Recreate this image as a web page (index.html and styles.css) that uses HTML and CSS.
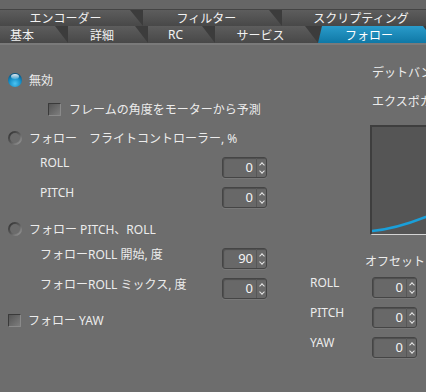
FILE: index.html
```html
<!DOCTYPE html>
<html lang="ja">
<head>
    <meta charset="UTF-8">
    <meta name="viewport" content="width=device-width, initial-scale=1.0">
    <title>フォロー</title>
    <link rel="stylesheet" href="styles.css">
</head>
<body>
    <!-- タブ -->
    <div class="tabs">
        <div class="tab-row row1">
            <div class="tab">エンコーダー</div>
            <div class="tab">フィルター</div>
            <div class="tab">スクリプティング</div>
        </div>
        <div class="tab-row row2">
            <div class="tab first">基本</div>
            <div class="tab">詳細</div>
            <div class="tab">RC</div>
            <div class="tab">サービス</div>
            <div class="tab active">フォロー</div>
        </div>
    </div>

    <div class="content">
        <div class="col-left">
            <div class="opt"><span class="radio on"></span>無効</div>
            <div class="opt sub"><span class="check"></span>フレームの角度をモーターから予測</div>
            <div class="opt"><span class="radio"></span>フォロー　フライトコントローラー, %</div>
            <div class="spin-row">
                <span class="label">ROLL</span>
                <div class="spin"><span class="val">0</span><span class="arrows"><i class="up"></i><i class="down"></i></span></div>
            </div>
            <div class="spin-row">
                <span class="label">PITCH</span>
                <div class="spin"><span class="val">0</span><span class="arrows"><i class="up"></i><i class="down"></i></span></div>
            </div>
            <div class="opt"><span class="radio"></span>フォロー PITCH、ROLL</div>
            <div class="spin-row">
                <span class="label">フォローROLL 開始, 度</span>
                <div class="spin"><span class="val">90</span><span class="arrows"><i class="up"></i><i class="down"></i></span></div>
            </div>
            <div class="spin-row">
                <span class="label">フォローROLL ミックス, 度</span>
                <div class="spin"><span class="val">0</span><span class="arrows"><i class="up"></i><i class="down"></i></span></div>
            </div>
            <div class="opt"><span class="check"></span>フォロー YAW</div>
        </div>

        <div class="col-right">
            <div class="caption">デットバンド, 度</div>
            <div class="caption expo">エクスポカーブ</div>
            <div class="chart">
                <svg width="200" height="107" viewBox="0 0 200 107">
                    <path d="M0 104 C 40 101, 120 67, 200 2" fill="none" stroke="#1a9fd9" stroke-width="2.5"/>
                </svg>
            </div>
            <div class="caption offset">オフセット</div>
            <div class="spin-row r">
                <span class="label">ROLL</span>
                <div class="spin"><span class="val">0</span><span class="arrows"><i class="up"></i><i class="down"></i></span></div>
            </div>
            <div class="spin-row r">
                <span class="label">PITCH</span>
                <div class="spin"><span class="val">0</span><span class="arrows"><i class="up"></i><i class="down"></i></span></div>
            </div>
            <div class="spin-row r">
                <span class="label">YAW</span>
                <div class="spin"><span class="val">0</span><span class="arrows"><i class="up"></i><i class="down"></i></span></div>
            </div>
        </div>
    </div>
</body>
</html>
```

FILE: styles.css
```css
/* ベース */
body {
    margin: 0;
    width: 426px;
    height: 392px;
    overflow: hidden;
    background: #6d6d6d;
    color: #ececec;
    font-family: "Noto Sans", "Noto Sans CJK JP", sans-serif;
    font-size: 12px;
}

/* タブ */
.tabs {
    padding-top: 9px;
    background: #666;
    border-bottom: 2px solid #7a7a7a;
}
.tab-row {
    display: flex;
    height: 17px;
    background: #3c3c3c;
}
.row1 {
    border-top: 1px solid #444;
    height: 16px;
}
.tab {
    flex: none;
    display: flex;
    align-items: center;
    justify-content: center;
    padding-right: 12px;
    box-sizing: border-box;
    background: linear-gradient(#5d5d5d, #484848);
    clip-path: polygon(0 0, calc(100% - 13px) 0, 100% 100%, 0 100%);
    color: #f2f2f2;
    white-space: nowrap;
}
.row1 .tab:nth-child(1) { width: 143px; }
.row1 .tab:nth-child(2) { width: 139px; }
.row1 .tab:nth-child(3) { width: 170px; }

.row2 .tab:nth-child(1) { width: 68px; justify-content: flex-start; padding-left: 10px; }
.row2 .tab:nth-child(2) { width: 80px; }
.row2 .tab:nth-child(3) { width: 67px; }
.row2 .tab:nth-child(4) { width: 103px; }
.row2 .tab.active {
    width: 118px;
    padding-right: 16px;
    background: linear-gradient(#2a9bca, #0f78a6);
    clip-path: polygon(4px 0, calc(100% - 13px) 0, 100% 100%, 0 100%);
    color: #fff;
}

/* 本体 */
.content {
    display: flex;
}
.col-left {
    flex: none;
    width: 300px;
    display: flex;
    flex-direction: column;
    gap: 9px;
    padding-top: 23px;
}
.col-right {
    flex: none;
    width: 300px;
}

.opt {
    display: flex;
    align-items: center;
    height: 16px;
    margin-top: 4px;
    padding-left: 8px;
    gap: 7px;
    white-space: nowrap;
}
.opt.sub {
    padding-left: 48px;
    gap: 8px;
}
.opt + .spin-row {
    margin-top: 2px;
}

/* ラジオ・チェック */
.radio {
    flex: none;
    position: relative;
    width: 14px;
    height: 14px;
    border-radius: 50%;
    background: linear-gradient(135deg, #2a2a2a, #5a5a5a 50%, #a5a5a5);
}
.radio::after {
    content: "";
    position: absolute;
    left: 2px;
    top: 2px;
    width: 10px;
    height: 10px;
    border-radius: 50%;
    background: #6b6b6b;
}
.radio.on {
    background: radial-gradient(circle at 50% 75%, #4cc3f2 0, #1690c8 45%, #0a5d8c 75%, #0a3f5e 100%);
}
.radio.on::after {
    left: 3px;
    top: 1px;
    width: 8px;
    height: 5px;
    background: linear-gradient(rgba(255,255,255,.9), rgba(255,255,255,.2));
}
.check {
    flex: none;
    width: 11px;
    height: 11px;
    border: 1px solid #3a3a3a;
    border-right-color: #8a8a8a;
    border-bottom-color: #8a8a8a;
    border-radius: 1px;
    background: linear-gradient(135deg, #555, #7d7d7d);
}

/* スピンボックス */
.spin-row {
    display: grid;
    grid-template-columns: 182px 45px;
    align-items: start;
    padding-left: 40px;
    white-space: nowrap;
}
.spin-row .label {
    margin-top: -3px;
}
.spin {
    height: 21px;
    box-sizing: border-box;
    display: flex;
    border: 1px solid #454545;
    border-radius: 3px;
    background: #686868;
    box-shadow: inset 1px 1px 1px rgba(0, 0, 0, 0.25), 0 1px 0 rgba(255, 255, 255, 0.08);
}
.spin .val {
    flex: 1;
    text-align: right;
    padding-right: 3px;
    line-height: 19px;
    font-size: 13px;
    color: #f4f4f4;
}
.spin .arrows {
    width: 10px;
    border-left: 1px solid #575757;
    display: flex;
    flex-direction: column;
    align-items: center;
    justify-content: space-between;
    padding: 5px 0 4px;
    box-sizing: border-box;
}
.spin i {
    width: 3px;
    height: 3px;
    border: solid #e8e8e8;
    border-width: 1.5px 0 0 1.5px;
}
.spin i.up {
    transform: rotate(45deg);
}
.spin i.down {
    transform: rotate(225deg);
}

/* 右側 */
.caption {
    padding-left: 72px;
    line-height: 16px;
    white-space: nowrap;
    margin-top: 20px;
}
.caption.expo {
    margin-top: 13px;
}
.caption.offset {
    padding-left: 65px;
    margin-top: 19px;
}
.chart {
    margin: 15px 0 0 70px;
    width: 200px;
    height: 110px;
    box-sizing: border-box;
    background: #555;
    border: 2px solid #3e3e3e;
    border-right: none;
    border-bottom: 1px solid #d4d4d4;
}
.chart svg {
    display: block;
}
.spin-row.r {
    grid-template-columns: 62px 45px;
    padding-left: 10px;
    margin-top: 9px;
}
.caption.offset + .spin-row.r {
    margin-top: 7px;
}
```
